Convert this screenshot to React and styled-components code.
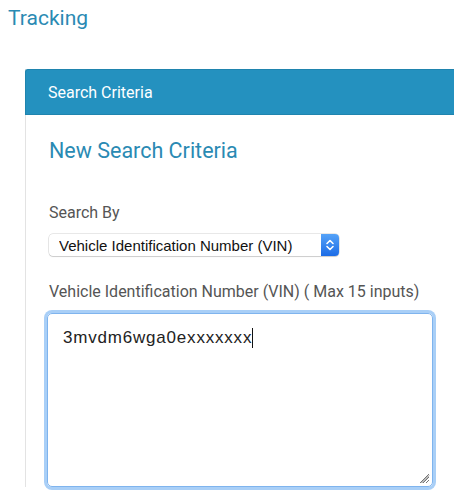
import React from 'react';
import styled, { createGlobalStyle } from 'styled-components';

const GlobalStyle = createGlobalStyle`
    html, body {
        margin: 0;
        padding: 0;
        background: #fff;
        font-family: Roboto, "Liberation Sans", sans-serif;
        overflow: hidden;
    }
`;

const Page = styled.div`
    width: 454px;
    height: 500px;
    overflow: hidden;
`;

const Title = styled.h1`
    margin: 0;
    padding: 6px 0 0 8px;
    font-size: 21px;
    line-height: 25px;
    font-weight: 400;
    color: #2a8ab3;
`;

const Panel = styled.div`
    margin: 38px 0 0 25px;
    width: 460px;
    border-left: 1px solid #e3e3e3;
`;

const PanelHeader = styled.div`
    height: 44px;
    display: flex;
    align-items: center;
    padding-left: 22px;
    margin-left: -1px;
    background: #2491bf;
    border: 1px solid #1f84ae;
    border-right: none;
    border-radius: 3px 0 0 0;
    color: #fff;
    font-size: 16px;
`;

const PanelBody = styled.div`
    padding: 23px 0 0 23px;
`;

const SubTitle = styled.h2`
    margin: 0 0 39px;
    font-size: 21.5px;
    line-height: 26px;
    font-weight: 400;
    color: #2a8ab3;
`;

const Label = styled.div`
    font-size: 16px;
    line-height: 19px;
    color: #555;
    margin-bottom: ${p => p.gap}px;
`;

const SelectBox = styled.div`
    display: flex;
    align-items: stretch;
    width: 290px;
    height: 22px;
    box-sizing: border-box;
    border-radius: 4px;
    background: #fff;
    box-shadow: 0 0 0 0.5px rgba(0, 0, 0, 0.18), 0 1px 1px rgba(0, 0, 0, 0.12);
    margin-bottom: 26px;
`;

const Select = styled.select`
    flex: 1;
    appearance: none;
    border: none;
    background: transparent;
    padding: 0 0 0 10px;
    font-family: "Liberation Sans", Arial, sans-serif;
    font-size: 15px;
    color: #111;
    outline: none;
`;

const Stepper = styled.span`
    width: 18px;
    display: flex;
    align-items: center;
    justify-content: center;
    border-radius: 0 4px 4px 0;
    background: linear-gradient(#55a3f8, #1c6ce6);
`;

const TextBox = styled.div`
    position: relative;
    width: 386px;
    height: 174px;
    box-sizing: border-box;
    margin-left: -2px;
    padding: 14px 15px;
    border: 1px solid #7fb4ee;
    border-radius: 5px;
    box-shadow: 0 0 0 3px #a9cff7;
    font-family: "Liberation Sans", Arial, sans-serif;
    font-size: 17px;
    letter-spacing: 0.8px;
    line-height: 20px;
    color: #222;
`;

const Caret = styled.span`
    display: inline-block;
    width: 1px;
    height: 20px;
    background: #111;
    vertical-align: top;
`;

const Grip = styled.svg`
    position: absolute;
    right: 2px;
    bottom: 2px;
`;

export default function App() {
    return (
        <Page>
            <GlobalStyle />
            <Title>Tracking</Title>
            <Panel>
                <PanelHeader>Search Criteria</PanelHeader>
                <PanelBody>
                    <SubTitle>New Search Criteria</SubTitle>
                    <Label gap={12}>Search By</Label>
                    <SelectBox>
                        <Select defaultValue="vin">
                            <option value="vin">Vehicle Identification Number (VIN)</option>
                        </Select>
                        <Stepper>
                            <svg width="10" height="14" viewBox="0 0 10 14" fill="none" stroke="#fff" strokeWidth="1.6" strokeLinecap="round" strokeLinejoin="round">
                                <path d="M2 5.5 L5 2.5 L8 5.5" />
                                <path d="M2 8.5 L5 11.5 L8 8.5" />
                            </svg>
                        </Stepper>
                    </SelectBox>
                    <Label gap={12}>Vehicle Identification Number (VIN) ( Max 15 inputs)</Label>
                    <TextBox>
                        3mvdm6wga0exxxxxxx<Caret />
                        <Grip width="12" height="12" viewBox="0 0 12 12" stroke="#777" strokeWidth="1">
                            <path d="M11 2 L2 11 M11 5 L5 11 M11 8 L8 11 M11 3.5 L3.5 11" />
                        </Grip>
                    </TextBox>
                </PanelBody>
            </Panel>
        </Page>
    );
}
